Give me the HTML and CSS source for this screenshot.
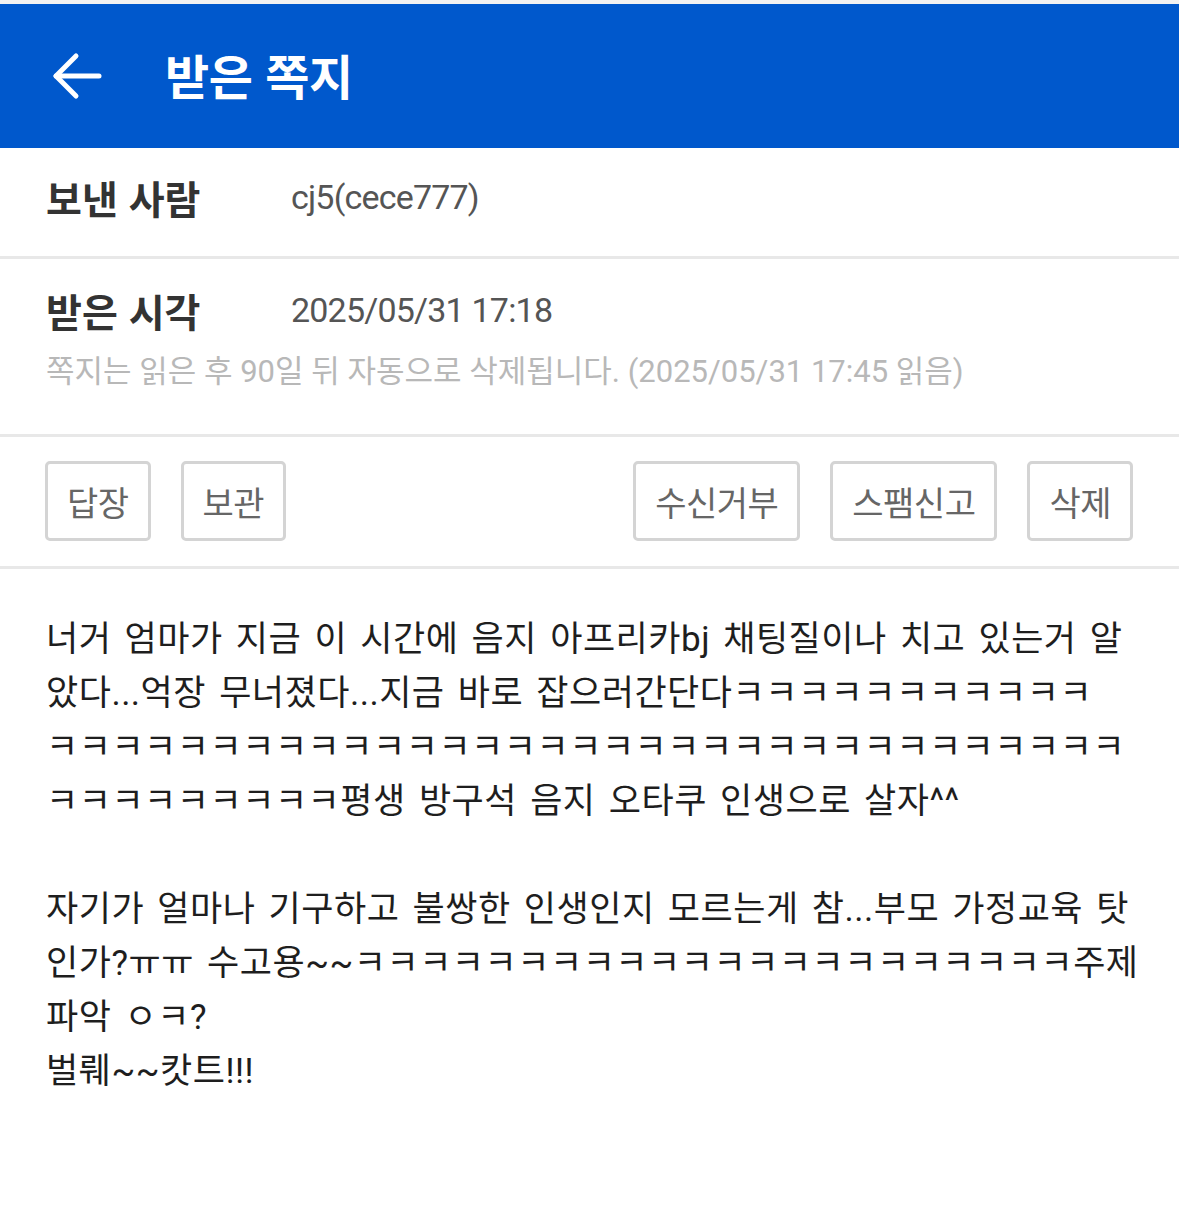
FILE: index.html
```html
<!DOCTYPE html>
<html lang="ko">

<head>
    <meta charset="UTF-8">
    <meta name="viewport" content="width=device-width, initial-scale=1.0">
    <title>받은 쪽지</title>
    <link rel="stylesheet" href="styles.css">
</head>

<body>
    <div class="status"></div>
    <div class="header">
        <a class="back" href="#">
            <svg width="50" height="48" viewBox="0 0 50 48" fill="none" stroke="#fff" stroke-width="5"
                stroke-linecap="round" stroke-linejoin="round">
                <path d="M4 24H47"></path>
                <path d="M24 4L4 24L24 44"></path>
            </svg>
        </a>
        <h1 class="title">받은 쪽지</h1>
    </div>

    <div class="info">
        <div class="row">
            <span class="label">보낸 사람</span>
            <span class="value">cj5(cece777)</span>
        </div>
    </div>
    <div class="info info-time">
        <div class="row">
            <span class="label">받은 시각</span>
            <span class="value">2025/05/31 17:18</span>
        </div>
        <p class="notice">쪽지는 읽은 후 90일 뒤 자동으로 삭제됩니다. (2025/05/31 17:45 읽음)</p>
    </div>

    <div class="actions">
        <div class="group">
            <button class="btn">답장</button>
            <button class="btn">보관</button>
        </div>
        <div class="group">
            <button class="btn">수신거부</button>
            <button class="btn">스팸신고</button>
            <button class="btn">삭제</button>
        </div>
    </div>

    <div class="content">
        <p>너거 엄마가 지금 이 시간에 음지 아프리카bj 채팅질이나 치고 있는거 알<br>았다...억장 무너졌다...지금 바로 잡으러간단다ㅋㅋㅋㅋㅋㅋㅋㅋㅋㅋㅋ<br>ㅋㅋㅋㅋㅋㅋㅋㅋㅋㅋㅋㅋㅋㅋㅋㅋㅋㅋㅋㅋㅋㅋㅋㅋㅋㅋㅋㅋㅋㅋㅋㅋㅋ<br>ㅋㅋㅋㅋㅋㅋㅋㅋㅋ평생 방구석 음지 오타쿠 인생으로 살자^^</p>
        <p>자기가 얼마나 기구하고 불쌍한 인생인지 모르는게 참...부모 가정교육 탓<br>인가?ㅠㅠ 수고용~~ㅋㅋㅋㅋㅋㅋㅋㅋㅋㅋㅋㅋㅋㅋㅋㅋㅋㅋㅋㅋㅋㅋ주제<br>파악 ㅇㅋ?<br>벌뤠~~캇트!!!</p>
    </div>
</body>

</html>
```

FILE: styles.css
```css
* {
    padding: 0;
    margin: 0;
    box-sizing: border-box;
}

body {
    background: #fff;
    font-family: Roboto, "Noto Sans CJK KR", sans-serif;
    color: #222;
}

.status {
    height: 4px;
    background: #f2f2f2;
}

.header {
    height: 144px;
    background: #0058cc;
    display: flex;
    align-items: center;
    padding-left: 52px;
}

.back {
    display: flex;
    width: 50px;
    height: 48px;
    margin-right: 63px;
}

.title {
    font-family: "Noto Sans CJK KR", sans-serif;
    font-size: 48px;
    font-weight: 700;
    letter-spacing: -0.5px;
    color: #fff;
    line-height: 60px;
    margin-bottom: 5px;
}

.info {
    padding: 24px 46px 34px;
    border-bottom: 3px solid #e8e8e8;
}

.info-time {
    padding: 26px 46px 42px;
}

.row {
    display: flex;
    align-items: center;
    height: 50px;
}

.label {
    width: 245px;
    flex-shrink: 0;
    font-family: "Noto Sans CJK KR", sans-serif;
    font-size: 39px;
    font-weight: 700;
    color: #333;
}

.value {
    font-size: 34px;
    letter-spacing: -0.8px;
    color: #555;
}

.notice {
    margin-top: 17px;
    line-height: 40px;
    font-size: 31px;
    color: #b8b8b8;
    white-space: nowrap;
}

.actions {
    display: flex;
    justify-content: space-between;
    padding: 24px 46px 25px 45px;
    border-bottom: 3px solid #e8e8e8;
}

.group {
    display: flex;
    gap: 30px;
}

.btn {
    height: 80px;
    padding: 0 19px;
    border: 3px solid #d4d4d4;
    border-radius: 5px;
    background: #fff;
    font-family: "Noto Sans CJK KR", sans-serif;
    font-size: 34px;
    letter-spacing: -0.5px;
    color: #666;
}

.content {
    padding: 44px 46px;
}

.content p {
    font-family: Roboto, "Noto Sans CJK KR", sans-serif;
    font-size: 35px;
    line-height: 54px;
    letter-spacing: 0.5px;
    word-spacing: 4px;
    color: #1e1e1e;
    white-space: nowrap;
    margin-bottom: 54px;
}
```
